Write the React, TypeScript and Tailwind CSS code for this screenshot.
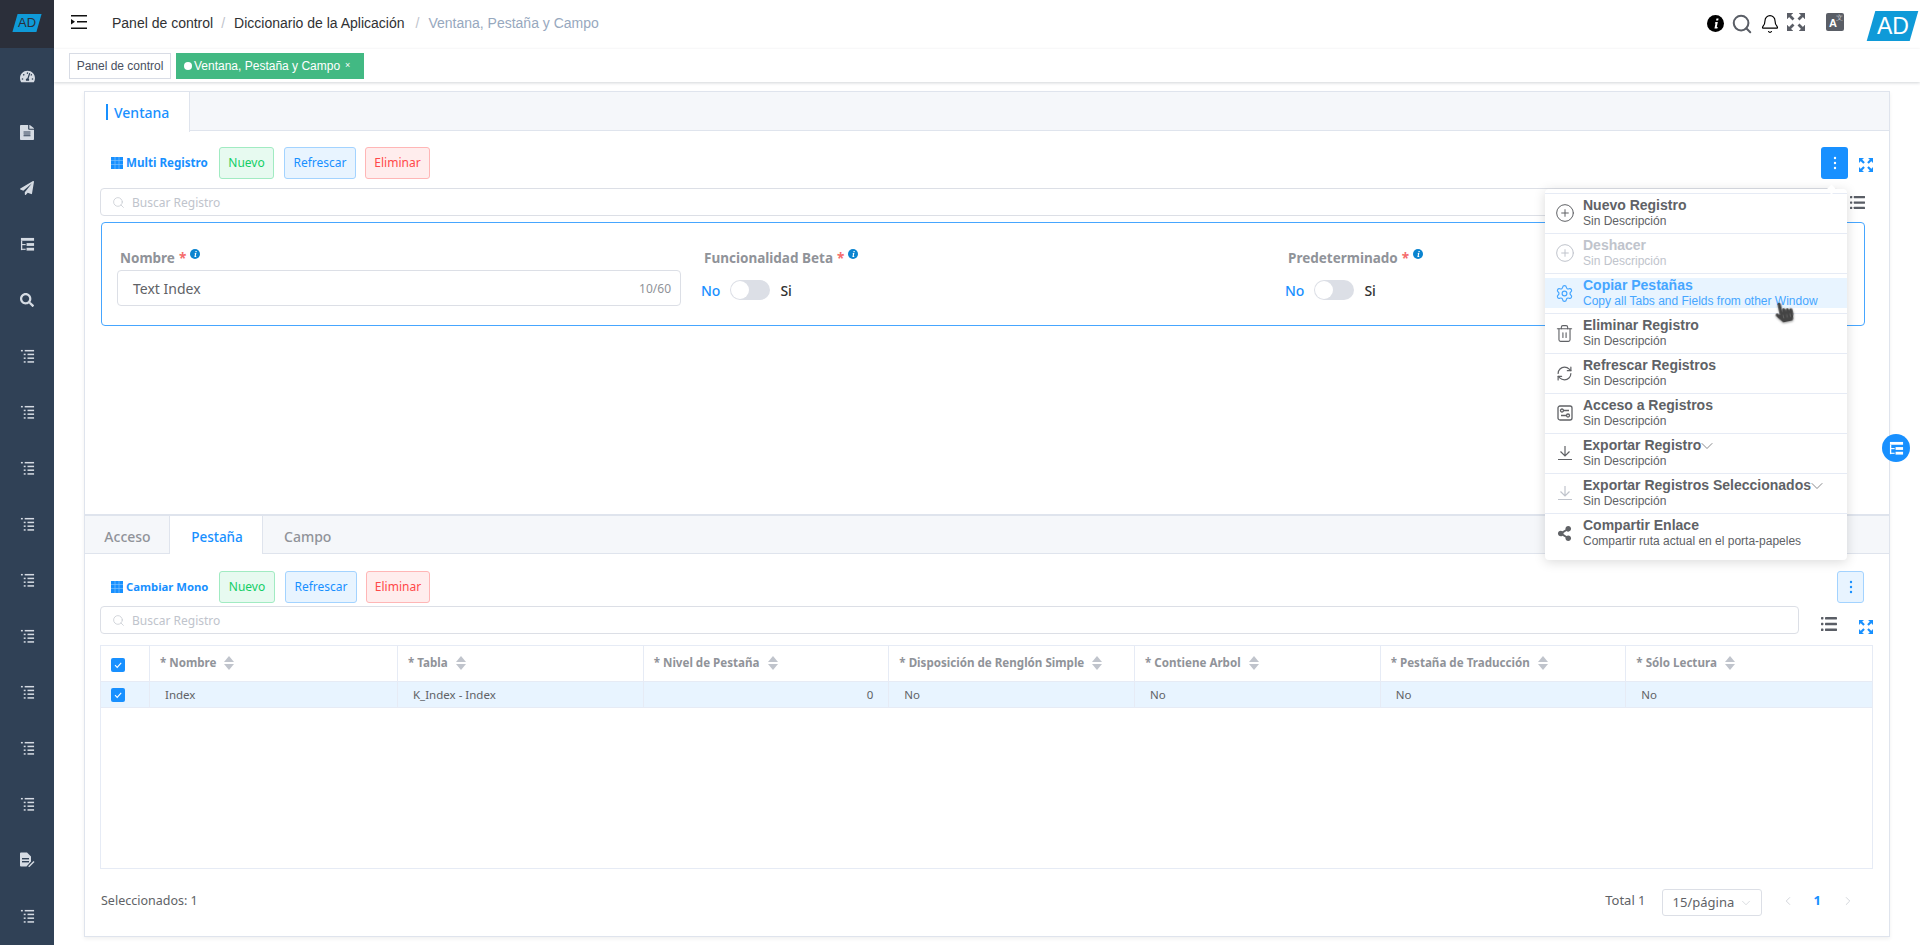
import React from "react";
import { Bell, ChevronDown, ChevronLeft, ChevronRight, CirclePlus, RefreshCw, Search, Settings, Trash2 } from "lucide-react";
import { FaFileAlt, FaHandPointer, FaPaperPlane, FaSearch, FaShareAlt, FaTachometerAlt } from "react-icons/fa";

const ListTree = ({ className = "" }: { className?: string }) => (
  <svg viewBox="0 0 16 16" className={className} fill="currentColor">
    <rect x="1" y="1" width="2" height="1.6" />
    <rect x="5" y="1" width="10" height="1.6" />
    <rect x="4" y="5" width="2" height="1.6" />
    <rect x="8" y="5" width="7" height="1.6" />
    <rect x="4" y="9" width="2" height="1.6" />
    <rect x="8" y="9" width="7" height="1.6" />
    <rect x="4" y="13" width="2" height="1.6" />
    <rect x="8" y="13" width="7" height="1.6" />
  </svg>
);

const TreeTable = ({ className = "" }: { className?: string }) => (
  <svg viewBox="0 0 16 16" className={className} fill="currentColor">
    <rect x="1" y="1" width="14" height="3" />
    <rect x="1" y="4" width="1.4" height="10" />
    <rect x="2" y="7.5" width="4" height="1.2" />
    <rect x="2" y="12.5" width="4" height="1.2" />
    <rect x="7" y="6.5" width="8" height="3" />
    <rect x="7" y="11.5" width="8" height="3" />
  </svg>
);

const DocEdit = ({ className = "" }: { className?: string }) => (
  <svg viewBox="0 0 16 16" className={className} fill="currentColor">
    <path d="M1 1.5A1 1 0 0 1 2 .5h6l4 4v5l-4.5 5H2a1 1 0 0 1-1-1z" />
    <path d="M9.5 14l5-5 1 1-5 5H9.500z" />
    <rect x="3" y="6" width="7" height="1.4" fill="#304156" />
    <rect x="3" y="9" width="7" height="1.400" fill="#304156" />
  </svg>
);

// four outward corner arrows, chunky head with a short stem
const Expand = ({ className = "" }: { className?: string }) => (
  <svg viewBox="0 0 18 18" className={className} fill="currentColor" stroke="currentColor">
    <path d="M0 0h6L0 6z" strokeWidth="0.4" />
    <path d="M18 0h-6l6 6z" strokeWidth="0.4" />
    <path d="M0 18h6l-6-6z" strokeWidth="0.4" />
    <path d="M18 18h-6l6-6z" strokeWidth="0.4" />
    <path d="M2 2l4.500 4.500M16 2l-4.500 4.500M2 16l4.500-4.500M16 16l-4.500-4.500" strokeWidth="2.800" fill="none" />
  </svg>
);

const Bars = ({ className = "" }: { className?: string }) => (
  <svg viewBox="0 0 16 16" className={className} fill="currentColor">
    <rect x="0" y="1" width="2.400" height="2.400" rx="0.6" />
    <rect x="4" y="1" width="12" height="2.400" rx="0.4" />
    <rect x="0" y="6.800" width="2.400" height="2.400" rx="0.6" />
    <rect x="4" y="6.800" width="12" height="2.400" rx="0.4" />
    <rect x="0" y="12.600" width="2.400" height="2.400" rx="0.6" />
    <rect x="4" y="12.600" width="12" height="2.400" rx="0.4" />
  </svg>
);

const Info = ({ className = "" }: { className?: string }) => (
  <svg viewBox="0 0 16 16" className={className}>
    <circle cx="8" cy="8" r="8" fill="currentColor" />
    <path d="M8.900 3.200h2l-.4 1.900h-2zM8 6.500h2.200L9.200 11.300h.9l-.3 1.400H7l1-4.800H7.300z" fill="#fff" />
  </svg>
);

const GridIcon = () => (
  <svg viewBox="0 0 12 12" className="w-[12px] h-[12px] shrink-0" fill="#1890ff">
    <rect width="12" height="12" />
    <path d="M0 3.500h12M0 7.500h12M4 0v12M8 0v12" stroke="#8cc8ff" strokeWidth="0.6" />
  </svg>
);

const Dots = () => (
  <svg viewBox="0 0 4 14" className="w-[4px] h-[14px]" fill="currentColor">
    <circle cx="2" cy="2" r="1.200" />
    <circle cx="2" cy="7" r="1.200" />
    <circle cx="2" cy="12" r="1.200" />
  </svg>
);

const Access = () => (
  <svg viewBox="0 0 16 16" className="w-[16px] h-[16px]" fill="none" stroke="currentColor" strokeWidth="1.300">
    <rect x="1" y="1" width="14" height="14" rx="2" />
    <circle cx="5" cy="5.500" r="1.500" />
    <path d="M7 5.500h5M4 10.500h5" />
    <circle cx="11" cy="10.500" r="1.500" />
  </svg>
);

const Download = () => (
  <svg viewBox="0 0 16 16" className="w-[16px] h-[16px]" fill="none" stroke="currentColor" strokeWidth="1.200">
    <path d="M8 1v9.500M3.500 6.500L8 11l4.500-4.500M1 14.500h14" />
  </svg>
);

const Check = () => (
  <span className="flex h-[14px] w-[14px] items-center justify-center rounded-[2px] bg-[#1890ff]">
    <svg viewBox="0 0 10 10" className="h-[10px] w-[10px]" fill="none" stroke="#fff" strokeWidth="1.100">
      <path d="M2 5.200l2.200 2.200L8.200 2.800" />
    </svg>
  </span>
);

const SortCaret = () => (
  <span className="ml-[8px] flex flex-col gap-[2px]">
    <span className="h-0 w-0 border-x-[5.500px] border-b-[6px] border-x-transparent border-b-[#c0c4cc]" />
    <span className="h-0 w-0 border-x-[5.500px] border-t-[6px] border-x-transparent border-t-[#c0c4cc]" />
  </span>
);

const sideIcons = [
  <FaTachometerAlt className="w-[15px] h-[15px]" />,
  <FaFileAlt preserveAspectRatio="none" className="w-[14px] h-[15px]" />,
  <FaPaperPlane className="w-[14px] h-[14px]" />,
  <TreeTable className="w-[15px] h-[15px]" />,
  <FaSearch className="w-[14px] h-[14px]" />,
  ...Array.from({ length: 9 }, () => <ListTree className="w-[15px] h-[15px]" />),
  <DocEdit className="w-[16px] h-[16px]" />,
  <ListTree className="w-[15px] h-[15px]" />,
];

const columns = ["* Nombre", "* Tabla", "* Nivel de Pestaña", "* Disposición de Renglón Simple", "* Contiene Arbol", "* Pestaña de Traducción", "* Sólo Lectura"];

const menuItems = [
  { title: "Nuevo Registro", desc: "Sin Descripción", icon: <CirclePlus size={20} strokeWidth={1.2} /> },
  { title: "Deshacer", desc: "Sin Descripción", icon: <CirclePlus size={20} strokeWidth={1.2} />, off: true },
  { title: "Copiar Pestañas", desc: "Copy all Tabs and Fields from other Window", icon: <Settings size={19} strokeWidth={1.5} />, on: true },
  { title: "Eliminar Registro", desc: "Sin Descripción", icon: <Trash2 size={19} strokeWidth={1.4} /> },
  { title: "Refrescar Registros", desc: "Sin Descripción", icon: <RefreshCw size={17} strokeWidth={1.7} /> },
  { title: "Acceso a Registros", desc: "Sin Descripción", icon: <Access /> },
  { title: "Exportar Registro", desc: "Sin Descripción", icon: <Download />, caret: true },
  { title: "Exportar Registros Seleccionados", desc: "Sin Descripción", icon: <Download />, caret: true, iconOff: true },
  { title: "Compartir Enlace", desc: "Compartir ruta actual en el porta-papeles", icon: <FaShareAlt className="w-[15px] h-[15px]" /> },
];

const Toolbar = ({ label, big }: { label: string; big?: boolean }) => (
  <div className="flex h-[32px] items-center pl-[11px] text-[12px]">
    <GridIcon />
    <span className={`ml-[3px] w-[93px] font-bold text-[#1890ff] ${big ? "text-[11.300px]" : "text-[11.600px]"}`}>{label}</span>
    <button className={`h-[32px] rounded-[3px] border border-[#a1ebc2] bg-[#e7faf0] text-[#13ce66] ${big ? "w-[56px]" : "w-[55px]"}`}>Nuevo</button>
    <button className={`ml-[10px] h-[32px] w-[72px] rounded-[3px] border border-[#a3d3ff] bg-[#e8f4ff] text-[#1890ff]`}>Refrescar</button>
    <button className={`h-[32px] rounded-[3px] border border-[#ffb6b6] bg-[#ffeded] text-[#ff4949] ${big ? "ml-[9px] w-[64px]" : "ml-[9px] w-[65px]"}`}>Eliminar</button>
  </div>
);

const SearchBox = ({ className }: { className: string }) => (
  <div className={`flex h-[28px] items-center rounded-[4px] border border-[#dcdfe6] pl-[11px] text-[12px] text-[#c0c4cc] ${className}`}>
    <Search size={13} strokeWidth={1.3} className="mr-[7px]" />
    <span className="pt-[1px]">Buscar Registro</span>
  </div>
);

const Toggle = () => (
  <div className="mt-[10px] flex h-[24px] items-center text-[14px]">
    <span className="font-medium text-[#1890ff]">No</span>
    <span className="ml-[10px] flex h-[20px] w-[40px] items-center rounded-full bg-[#dcdfe6] pl-[1px]">
      <span className="h-[18px] w-[18px] rounded-full bg-white" />
    </span>
    <span className="ml-[10px] font-medium text-[#303133]">Si</span>
  </div>
);

const FieldLabel = ({ text }: { text: string }) => (
  <div className="flex h-[20px] items-center pl-[3px] text-[13.500px] font-bold text-[#909399]">
    {text}
    <span className="ml-[4px] text-[#f56c6c]">*</span>
    <Info className="ml-[4px] -mt-[9px] h-[10px] w-[10px] text-[#0a84d0]" />
  </div>
);

export default function App() {
  return (
    <div className="relative flex h-[945px] w-[1920px] overflow-hidden bg-white font-['Noto_Sans',sans-serif]">
      <aside className="w-[54px] shrink-0 bg-[#304156] text-[#d5dbe3]">
        <div className="flex h-[48px] items-center justify-center bg-[#2b2f3a] pb-[2px]">
          <span className="flex h-[18px] w-[24px] -skew-x-[16deg] items-center justify-center bg-[#0f9ad8]">
            <span className="skew-x-[16deg] font-['Liberation_Sans',sans-serif] text-[13px] text-[#2b2f3a]">AD</span>
          </span>
        </div>
        {sideIcons.map((icon, i) => (
          <div key={i} className="flex h-[56px] items-center justify-center">
            {icon}
          </div>
        ))}
      </aside>

      <div className="flex min-w-0 flex-1 flex-col">
        <header className="flex h-[49px] items-center font-['Liberation_Sans',sans-serif] text-[14px]">
          <svg viewBox="0 0 16 14" className="ml-[17px] mb-[6px] h-[14px] w-[16px]" fill="#111">
            <rect x="0" y="0" width="16" height="1.500" />
            <rect x="6" y="6" width="10" height="1.500" />
            <rect x="0" y="12.500" width="16" height="1.500" />
            <path d="M0 4l4 2.700L0 9.500z" />
          </svg>
          <div className="mb-[2px] flex items-center">
            <span className="ml-[25px] text-[#303133]">Panel de control</span>
            <span className="ml-[8px] text-[#c0c4cc]">/</span>
            <span className="ml-[9px] text-[#303133]">Diccionario de la Aplicación</span>
            <span className="ml-[11px] text-[#c0c4cc]">/</span>
            <span className="ml-[9px] text-[#97a8be]">Ventana, Pestaña y Campo</span>
          </div>
          <div className="ml-auto flex items-center">
            <Info className="mb-[3px] h-[17px] w-[17px] text-black" />
            <Search size={22} strokeWidth={2.200} className="mb-[2px] ml-[7px] text-[#5a5e66]" />
            <Bell size={20} strokeWidth={1.4} className="mb-[1px] ml-[7px] text-black" />
            <Expand className="mb-[5px] ml-[7px] h-[18px] w-[18px] text-[#5a5e66]" />
            <span className="relative mb-[5px] ml-[21px] flex h-[18px] w-[18px] items-center justify-center rounded-[2px] bg-[#5a5e66] pr-[4px] pt-[3px] text-[11px] font-bold leading-none text-white">
              A
              <span className="absolute right-[1px] top-[1px] text-[7px] font-normal text-[#c8ccd2]">文</span>
            </span>
            <span className="ml-[27px] mr-[6px] mt-[2px] flex h-[30px] w-[43px] -skew-x-[16deg] items-center justify-center bg-[#0f9ad8]">
              <span className="skew-x-[16deg] text-[23px] text-white">AD</span>
            </span>
          </div>
        </header>

        <div className="flex h-[33px] items-start gap-[5px] pl-[15px] pt-[4px] font-['Liberation_Sans',sans-serif] text-[12px] shadow-[0_1px_3px_rgba(0,21,41,0.18)]">
          <span className="flex h-[26px] w-[102px] items-center justify-center border border-[#d8dce5] text-[#495060]">Panel de control</span>
          <span className="flex h-[26px] w-[188px] items-center bg-[#42b983] pl-[8px] text-white">
            <span className="mr-[2px] h-[8px] w-[8px] rounded-full bg-white" />
            Ventana, Pestaña y Campo
            <span className="ml-[5px] text-[9px]">×</span>
          </span>
        </div>

        <main className="mx-[30px] mt-[9px] h-[846px] border border-[#dfe4ed] shadow-[0_2px_4px_rgba(0,0,0,0.06)]">
          <section className="h-[424px] border-b-2 border-[#dfe4ed]">
            <div className="flex h-[39px] border-b border-[#dfe4ed] bg-[#f5f7fa]">
              <div className="-mb-[1px] flex h-[40px] w-[105px] items-center border-r border-[#dfe4ed] bg-white pl-[21px] text-[14px] font-medium text-[#1890ff]">
                <span className="mr-[6px] h-[16px] w-[2px] bg-[#1890ff]" />
                Ventana
              </div>
            </div>
            <div className="px-[15px] pt-[16px]">
              <div className="flex items-start">
                <Toolbar label="Multi Registro" />
                <button className="ml-auto flex h-[32px] w-[27px] items-center justify-center rounded-[3px] bg-[#1890ff] text-white">
                  <Dots />
                </button>
                <Expand className="ml-[11px] mr-[1px] mt-[11px] h-[14px] w-[14px] text-[#1890ff]" />
              </div>
              <div className="mt-[9px] flex items-center">
                <SearchBox className="w-[1738px]" />
                <Bars className="ml-[12px] h-[15px] w-[15px] text-[#5a5e66]" />
              </div>
              <div className="ml-[1px] mr-[9px] mt-[6px] grid h-[104px] grid-cols-[584px_584px_1fr] rounded-[4px] border border-[#46a6ff] pl-[15px] pt-[25px]">
                <div>
                  <FieldLabel text="Nombre" />
                  <div className="mt-[2px] flex h-[36px] w-[564px] items-center justify-between rounded-[4px] border border-[#dcdfe6] pl-[15px] pr-[9px] text-[14px] text-[#606266]">
                    Text Index
                    <span className="pt-[1px] text-[12px] text-[#909399]">10/60</span>
                  </div>
                </div>
                <div>
                  <FieldLabel text="Funcionalidad Beta" />
                  <Toggle />
                </div>
                <div>
                  <FieldLabel text="Predeterminado" />
                  <Toggle />
                </div>
              </div>
            </div>
          </section>

          <section>
            <div className="flex h-[38px] border-b border-[#dfe4ed] bg-[#f5f7fa] text-[14px] font-medium text-[#909399]">
              <div className="flex w-[85px] items-center justify-center border-r border-[#dfe4ed] pl-[1px] pt-[4px]">Acceso</div>
              <div className="-mb-[1px] flex h-[38px] w-[93px] items-center justify-center border-r border-[#dfe4ed] bg-white pl-[2px] pt-[4px] text-[13.500px] text-[#1890ff]">Pestaña</div>
              <div className="flex items-center pl-[21px] pt-[4px]">Campo</div>
            </div>
            <div className="px-[15px] pt-[17px]">
              <div className="flex items-start">
                <Toolbar label="Cambiar Mono" big />
                <button className="ml-auto mr-[10px] flex h-[32px] w-[27px] items-center justify-center rounded-[3px] border border-[#a3d3ff] bg-[#e8f4ff] text-[#1890ff]">
                  <Dots />
                </button>
              </div>
              <div className="mt-[3px] flex items-center">
                <SearchBox className="w-[1699px]" />
                <Bars className="ml-[22px] mt-[8px] h-[16px] w-[16px] text-[#5a5e66]" />
                <Expand className="ml-[22px] mr-[1px] mt-[14px] h-[14px] w-[14px] text-[#1890ff]" />
              </div>

              <div className="mr-[1px] mt-[11px] h-[224px] border border-[#e6ebf5]">
                <div className="grid h-[36px] grid-cols-[49px_248px_repeat(6,1fr)] border-b border-[#e6ebf5] text-[11.600px] font-bold text-[#909399]">
                  <div className="flex items-center border-r border-[#e6ebf5] pl-[10px] pt-[2px]"><Check /></div>
                  {columns.map((c, i) => (
                    <div key={c} className={`flex items-center pb-[1px] pl-[10px] ${i < 6 ? "border-r border-[#e6ebf5]" : ""}`}>
                      {c}
                      <SortCaret />
                    </div>
                  ))}
                </div>
                <div className="grid h-[26px] grid-cols-[49px_248px_repeat(6,1fr)] border-b border-[#e6ebf5] bg-[#e8f4ff] text-[11.500px] text-[#606266]">
                  <div className="flex items-center border-r border-[#e6ebf5] pl-[10px]"><Check /></div>
                  <div className="flex items-center border-r border-[#e6ebf5] pl-[15px]">Index</div>
                  <div className="flex items-center border-r border-[#e6ebf5] pl-[15px]">K_Index - Index</div>
                  <div className="flex items-center justify-end border-r border-[#e6ebf5] pr-[15px]">0</div>
                  {["No", "No", "No", "No"].map((v, i) => (
                    <div key={i} className={`flex items-center pl-[15px] ${i < 3 ? "border-r border-[#e6ebf5]" : ""}`}>{v}</div>
                  ))}
                </div>
              </div>

              <div className="mt-[20px] flex h-[27px] items-center text-[13px] text-[#606266]">
                <span className="mb-[3px] pl-[1px] text-[12.500px]">Seleccionados: 1</span>
                <span className="mb-[3px] ml-auto">Total 1</span>
                <div className="ml-[16px] flex h-[27px] w-[100px] items-center justify-between rounded-[3px] border border-[#dcdfe6] pl-[10px] pr-[8px] pt-[1px]">
                  15/página
                  <ChevronDown size={14} strokeWidth={1} className="text-[#c0c4cc]" />
                </div>
                <ChevronLeft size={14} strokeWidth={1.200} className="mb-[3px] ml-[19px] text-[#c0c4cc]" />
                <span className="mb-[3px] ml-[19px] font-bold text-[#1890ff]">1</span>
                <ChevronRight size={14} strokeWidth={1.200} className="mb-[3px] ml-[20px] mr-[19px] text-[#c0c4cc]" />
              </div>
            </div>
          </section>
        </main>
      </div>

      {/* opened dropdown */}
      <div className="absolute left-[1545px] top-[189px] w-[302px] rounded-[4px] bg-white pb-[6px] pt-[4px] font-['Liberation_Sans',sans-serif] shadow-[0_2px_12px_rgba(0,0,0,0.15)]">
        <span className="absolute -top-[3px] left-[283px] h-[7px] w-[7px] rotate-45 bg-white" />
        {menuItems.map((m) => (
          <div key={m.title} className="h-[40px] border-t border-[#e6ebf5] last:h-[41px]">
            <div className={`mt-[4px] flex h-[30px] pr-[2px] ${m.on ? "bg-[#e8f4ff] text-[#46a6ff]" : m.off ? "text-[#c0c4cc]" : "text-[#606266]"}`}>
              <span className={`flex w-[38px] items-center justify-center pl-[1px] ${m.iconOff ? "text-[#c0c4cc]" : ""}`}>{m.icon}</span>
              <div>
                <div className="flex h-[15px] items-center text-[14px] font-bold leading-[15px]">
                  {m.title}
                  {m.caret && <ChevronDown size={20} strokeWidth={0.9} className="-ml-[4px]" />}
                </div>
                <div className="mt-[1px] text-[12px] leading-[15px]">{m.desc}</div>
              </div>
            </div>
          </div>
        ))}
      </div>

      <FaHandPointer className="absolute left-[1775px] top-[302px] h-[20px] w-[18px] -rotate-12 text-[#444] drop-shadow-[0_1px_1px_rgba(0,0,0,0.4)]" />

      <div className="absolute left-[1882px] top-[434px] flex h-[28px] w-[28px] items-center justify-center rounded-full bg-[#1890ff] text-white">
        <TreeTable className="h-[15px] w-[15px]" />
      </div>
    </div>
  );
}
